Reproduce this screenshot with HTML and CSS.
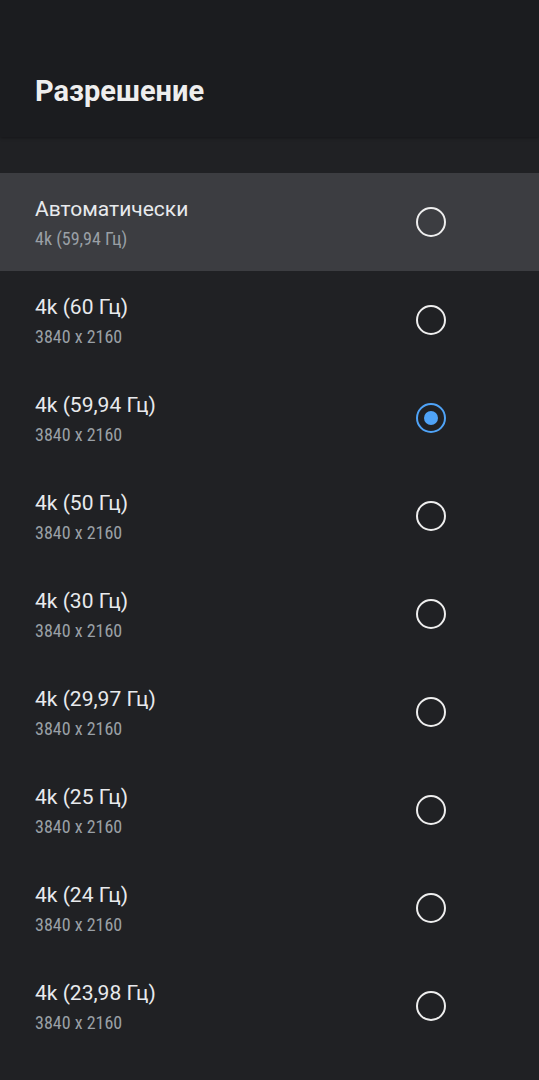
FILE: index.html
```html
<!DOCTYPE html>
<html lang="ru">
<head>
    <meta charset="UTF-8">
    <meta name="viewport" content="width=device-width, initial-scale=1.0">
    <title>Разрешение</title>
    <link rel="stylesheet" href="styles.css">
</head>
<body>

<div class="header">
    <h1>Разрешение</h1>
</div>

<!-- List of resolution options -->
<div class="options">
    <div class="option focused">
        <div class="option-text">
            <div class="option-title">Автоматически</div>
            <div class="option-sub">4k (59,94 Гц)</div>
        </div>
        <span class="radio"></span>
    </div>
    <div class="option">
        <div class="option-text">
            <div class="option-title">4k (60 Гц)</div>
            <div class="option-sub">3840 x 2160</div>
        </div>
        <span class="radio"></span>
    </div>
    <div class="option">
        <div class="option-text">
            <div class="option-title">4k (59,94 Гц)</div>
            <div class="option-sub">3840 x 2160</div>
        </div>
        <span class="radio checked"></span>
    </div>
    <div class="option">
        <div class="option-text">
            <div class="option-title">4k (50 Гц)</div>
            <div class="option-sub">3840 x 2160</div>
        </div>
        <span class="radio"></span>
    </div>
    <div class="option">
        <div class="option-text">
            <div class="option-title">4k (30 Гц)</div>
            <div class="option-sub">3840 x 2160</div>
        </div>
        <span class="radio"></span>
    </div>
    <div class="option">
        <div class="option-text">
            <div class="option-title">4k (29,97 Гц)</div>
            <div class="option-sub">3840 x 2160</div>
        </div>
        <span class="radio"></span>
    </div>
    <div class="option">
        <div class="option-text">
            <div class="option-title">4k (25 Гц)</div>
            <div class="option-sub">3840 x 2160</div>
        </div>
        <span class="radio"></span>
    </div>
    <div class="option">
        <div class="option-text">
            <div class="option-title">4k (24 Гц)</div>
            <div class="option-sub">3840 x 2160</div>
        </div>
        <span class="radio"></span>
    </div>
    <div class="option">
        <div class="option-text">
            <div class="option-title">4k (23,98 Гц)</div>
            <div class="option-sub">3840 x 2160</div>
        </div>
        <span class="radio"></span>
    </div>
</div>

</body>
</html>
```

FILE: styles.css
```css
body {
    font-family: Roboto, "Liberation Sans", sans-serif;
    margin: 0;
    padding: 0;
    background-color: #202124;
    color: #e8eaed;
    height: 1080px;
    overflow: hidden;
}

.header {
    height: 137px;
    background-color: #1b1c1f;
    box-shadow: 0 1px 3px rgba(0, 0, 0, 0.35);
    padding: 0 35px;
    display: flex;
    align-items: center;
    box-sizing: border-box;
}

h1 {
    margin: 0;
    padding-top: 44px;
    font-size: 29px;
    font-weight: 700;
    color: #eeeeee;
}

.options {
    padding-top: 36px;
}

.option {
    height: 98px;
    display: flex;
    align-items: center;
    padding: 0 93px 0 35px;
}

.option.focused {
    background-color: #3c3d41;
}

.option-text {
    flex: 1;
    padding-top: 3px;
}

.option-title {
    font-size: 21px;
    line-height: 26px;
    color: #e8eaed;
}

.option-sub {
    font-family: "Liberation Sans Narrow", "Roboto Condensed", Roboto, sans-serif;
    font-size: 18px;
    line-height: 24px;
    margin-top: 5px;
    color: #9aa0a6;
}

.radio {
    width: 30px;
    height: 30px;
    border: 2.5px solid #eeeeee;
    border-radius: 50%;
    box-sizing: border-box;
    position: relative;
}

.radio.checked {
    border-color: #4fa3f7;
}

.radio.checked::after {
    content: "";
    position: absolute;
    left: 50%;
    top: 50%;
    width: 14px;
    height: 14px;
    margin: -7px 0 0 -7px;
    border-radius: 50%;
    background-color: #4fa3f7;
}
```
